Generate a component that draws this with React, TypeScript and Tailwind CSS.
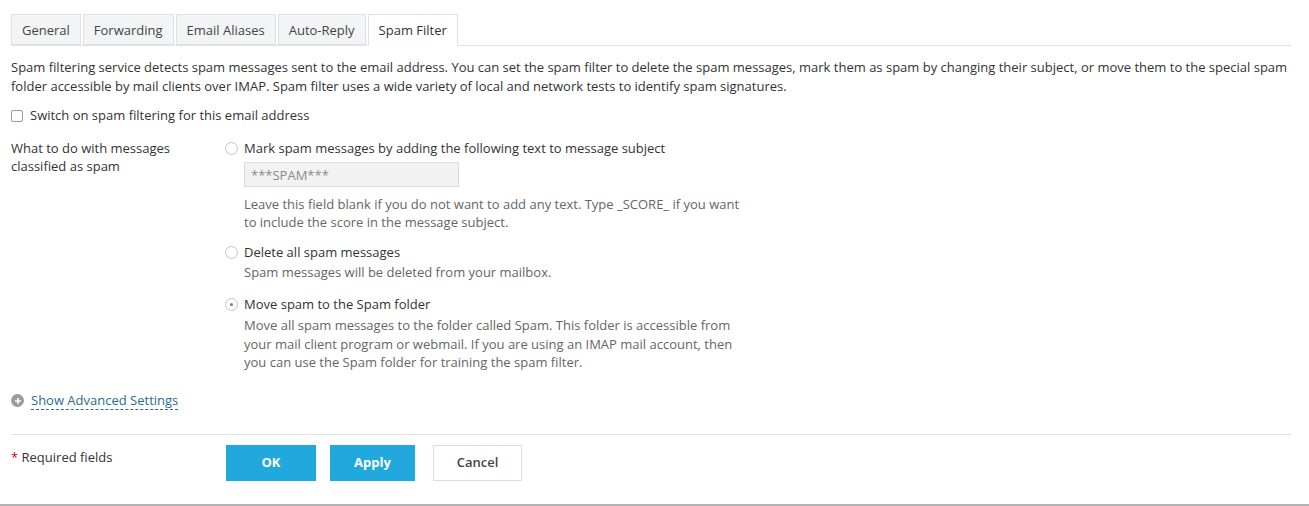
const tabs = ['General', 'Forwarding', 'Email Aliases', 'Auto-Reply', 'Spam Filter'];

function Radio({ checked }: { checked?: boolean }) {
  return (
    <span className="mt-[3px] flex h-[13px] w-[13px] shrink-0 items-center justify-center rounded-full border border-[#c4c4c4] bg-white">
      {checked && <span className="h-[3px] w-[3px] rounded-full bg-[#777]" />}
    </span>
  );
}

export default function App() {
  return (
    <div
      className="min-h-[506px] w-[1309px] border-b-2 border-[#b3b3b3] bg-white pl-[11px] pr-[18px] pt-[14px] text-[13px] leading-[19px] text-[#333]"
      style={{ fontFamily: '"Open Sans", sans-serif' }}
    >
      <div className="flex gap-[2px] border-b border-[#dfe1e4]">
        {tabs.map((t) => {
          const active = t === 'Spam Filter';
          return (
            <div
              key={t}
              className={
                active
                  ? '-mb-px border border-b-0 border-[#dfe1e4] bg-white px-[10px] pb-[6px] pt-[6px] text-[#333]'
                  : 'border border-[#dfe1e4] bg-[#f3f4f6] px-[10px] pb-[4px] pt-[6px] text-[#444]'
              }
            >
              {t}
            </div>
          );
        })}
      </div>

      <p className="mt-[12px]">
        Spam filtering service detects spam messages sent to the email address. You can set the spam filter to delete the
        spam messages, mark them as spam by changing their subject, or move them to the special spam folder accessible by
        mail clients over IMAP. Spam filter uses a wide variety of local and network tests to identify spam signatures.
      </p>

      <label className="mt-[10px] flex items-center gap-[7px]">
        <span className="h-[12px] w-[12px] rounded-[2px] border border-[#9a9a9a] bg-white" />
        <span>Switch on spam filtering for this email address</span>
      </label>

      <div className="mt-[14px] flex leading-[18px]">
        <div className="w-[214px] shrink-0 pr-4">What to do with messages classified as spam</div>
        <div className="flex flex-col">
          <div className="flex gap-[6px]">
            <Radio />
            <div>
              <div className="leading-[18px]">Mark spam messages by adding the following text to message subject</div>
              <div className="mt-[5px] flex h-[25px] w-[215px] items-center border border-[#dcdcdc] bg-[#f2f2f2] px-[6px] text-[#8a8a8a]">
                ***SPAM***
              </div>
              <div className="mt-[8px] w-[500px] text-[#666]">
                Leave this field blank if you do not want to add any text. Type _SCORE_ if you want to include the score in
                the message subject.
              </div>
            </div>
          </div>

          <div className="mt-[12px] flex gap-[6px]">
            <Radio />
            <div>
              <div>Delete all spam messages</div>
              <div className="mt-[2px] text-[#666]">Spam messages will be deleted from your mailbox.</div>
            </div>
          </div>

          <div className="mt-[14px] flex gap-[6px]">
            <Radio checked />
            <div>
              <div>Move spam to the Spam folder</div>
              <div className="mt-[3px] w-[500px] leading-[18.5px] text-[#666]">
                Move all spam messages to the folder called Spam. This folder is accessible from your mail client program
                or webmail. If you are using an IMAP mail account, then you can use the Spam folder for training the spam
                filter.
              </div>
            </div>
          </div>
        </div>
      </div>

      <div className="mt-[20px] flex items-center gap-[7px]">
        <span className="flex h-[13px] w-[13px] items-center justify-center rounded-full bg-[#9c9c9c]">
          <svg width="8" height="8" viewBox="0 0 8 8">
            <path d="M4 1v6M1 4h6" stroke="#fff" strokeWidth="1.6" />
          </svg>
        </span>
        <span className="border-b border-dashed border-[#2a6d8c] leading-[17px] text-[#2a6d8c]">Show Advanced Settings</span>
      </div>

      <div className="mt-[24px] flex border-t border-[#e1e2e6] pb-[23px] pt-[10px]">
        <div className="w-[215px] shrink-0 pt-[3px]">
          <span className="text-[#d0021b]">*</span> Required fields
        </div>
        <div className="flex gap-[14px]">
          <button className="h-[36px] w-[90px] bg-[#21a9dd] font-bold text-white">OK</button>
          <button className="h-[36px] w-[85px] bg-[#21a9dd] font-bold text-white">Apply</button>
          <button className="ml-[4px] h-[36px] w-[89px] border border-[#dcdcdc] bg-white font-semibold text-[#444]">
            Cancel
          </button>
        </div>
      </div>
    </div>
  );
}
